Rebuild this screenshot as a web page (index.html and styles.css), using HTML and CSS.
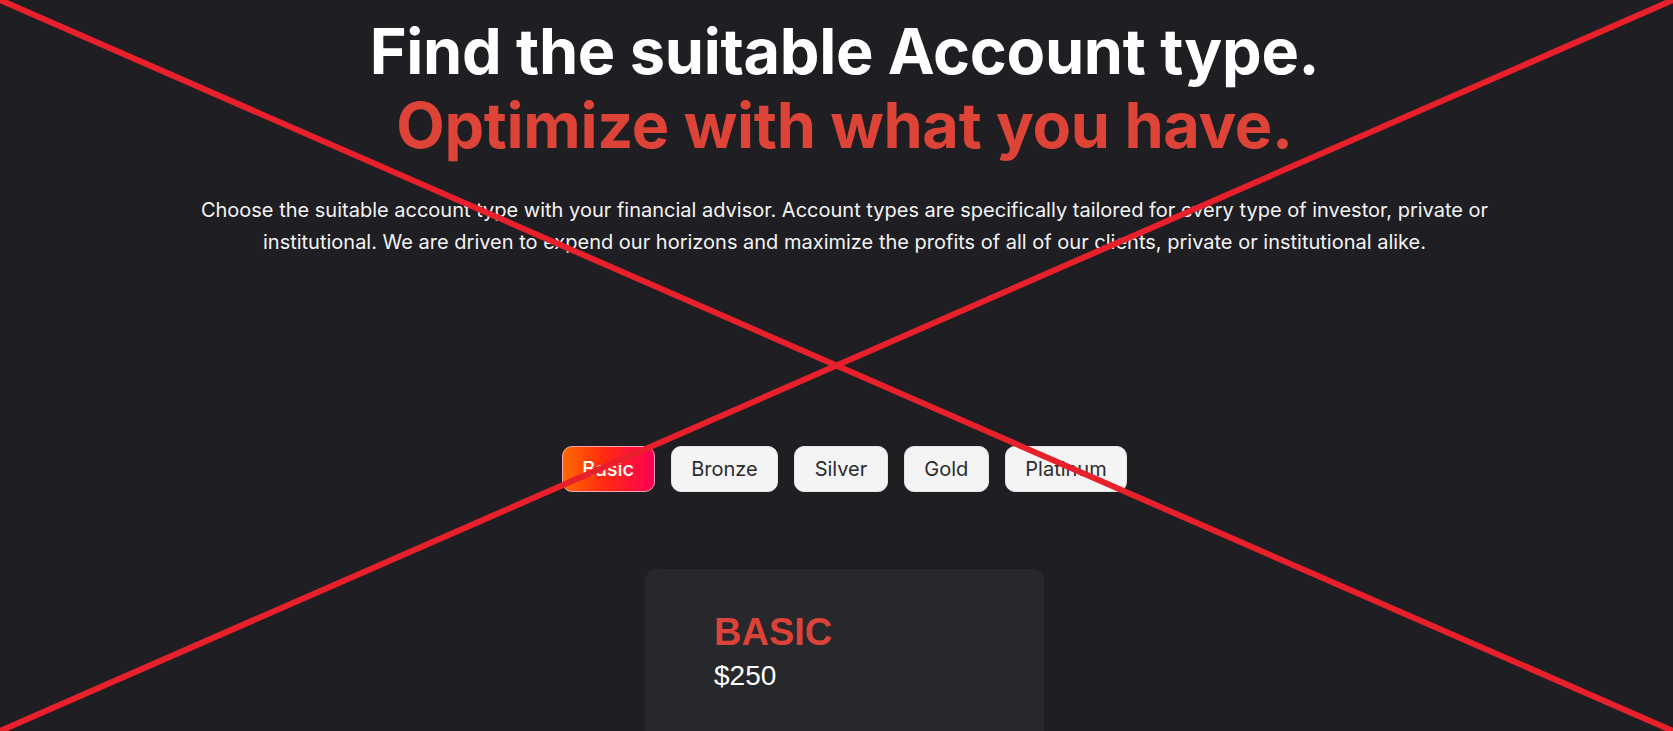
FILE: index.html
```html
<!DOCTYPE html>
<html lang="en">
<head>
<meta charset="utf-8">
<title>Account types</title>
<link rel="stylesheet" href="styles.css">
</head>
<body>
<main class="page">
  <header class="hero">
    <h1 class="hero-title">
      <span class="hero-line">Find the suitable Account type.</span>
      <span class="hero-line hero-accent">Optimize with what you have.</span>
    </h1>
    <p class="hero-text">Choose the suitable account type with your financial advisor. Account types are specifically tailored for every type of investor, private or institutional. We are driven to expend our horizons and maximize the profits of all of our clients, private or institutional alike.</p>
  </header>

  <nav class="tabs">
    <button class="tab tab-active">Basic</button>
    <button class="tab">Bronze</button>
    <button class="tab">Silver</button>
    <button class="tab">Gold</button>
    <button class="tab">Platinum</button>
  </nav>

  <section class="card">
    <h2 class="card-title">BASIC</h2>
    <p class="card-price">$250</p>
  </section>
</main>

<svg class="cross" viewBox="0 0 100 100" preserveAspectRatio="none" aria-hidden="true">
  <line x1="0" y1="0" x2="100" y2="100" vector-effect="non-scaling-stroke"/>
  <line x1="100" y1="0" x2="0" y2="100" vector-effect="non-scaling-stroke"/>
</svg>
</body>
</html>
```

FILE: styles.css
```css
html, body {
  margin: 0;
  padding: 0;
  background: #1f1e23;
  height: 100%;
  overflow: hidden;
}

body {
  font-family: Inter, "Noto Sans", "Liberation Sans", sans-serif;
  color: #ffffff;
}

.page {
  padding: 14px 0 0 16px;
  display: flex;
  flex-direction: column;
  align-items: center;
}

.hero {
  display: flex;
  flex-direction: column;
  align-items: center;
  text-align: center;
}

.hero-title {
  margin: 0;
  font-size: 63px;
  line-height: 74px;
  font-weight: 700;
  letter-spacing: -0.3px;
}

.hero-line {
  display: block;
}

.hero-accent {
  color: #dd4337;
}

.hero-text {
  margin: 32px 0 0;
  max-width: 1320px;
  font-size: 20px;
  line-height: 32px;
  color: #f4f4f4;
}

.tabs {
  margin-top: 188px;
  display: flex;
  gap: 16px;
}

.tab {
  font-family: Inter, "Noto Sans", sans-serif;
  font-size: 20px;
  line-height: 26px;
  padding: 9px 19.5px;
  border: 1px solid #e6e6e6;
  border-radius: 10px;
  background: #f4f4f5;
  color: #2b2b2e;
  cursor: pointer;
}

.tab-active {
  background: linear-gradient(90deg, #ff6a00 0%, #ff2a10 45%, #ff0055 100%);
  border-color: #f7a3b4;
  color: #ffffff;
  font-weight: 500;
}

.card {
  margin-top: 77px;
  width: 399px;
  box-sizing: border-box;
  padding: 42px 69px 60px;
  background: #27282c;
  border-radius: 12px;
  min-height: 200px;
}

.card-title {
  margin: 0;
  font-family: "Liberation Sans", Arial, sans-serif;
  font-size: 38px;
  line-height: 1.15;
  font-weight: 700;
  color: #dc4238;
}

.card-price {
  margin: 5px 0 0;
  font-family: "Liberation Sans", Arial, sans-serif;
  font-size: 28px;
  line-height: 1.15;
  color: #ffffff;
}

.cross {
  position: fixed;
  left: 0;
  top: 0;
  width: 100vw;
  height: 100vh;
  pointer-events: none;
}

.cross line {
  stroke: #e8202b;
  stroke-width: 6px;
}
```
